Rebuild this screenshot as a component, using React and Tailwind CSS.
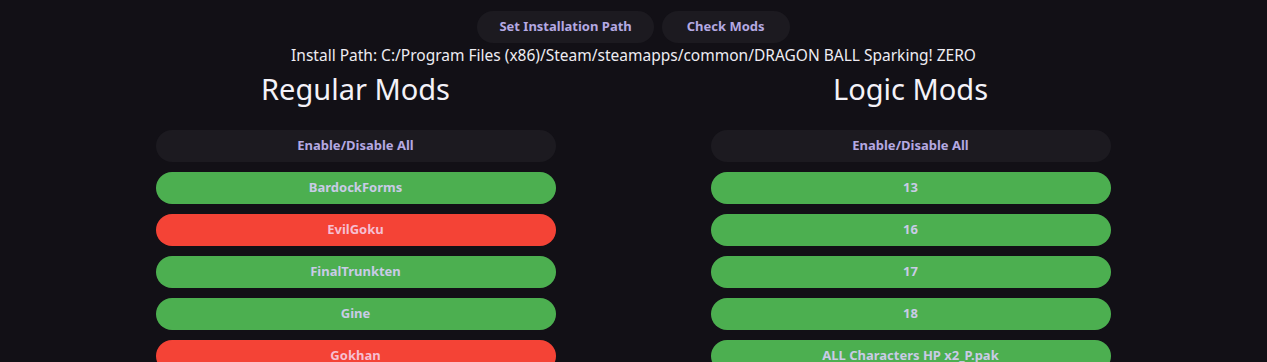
import { useState } from 'react'

const regularMods = [
  { name: 'BardockForms', on: true },
  { name: 'EvilGoku', on: false },
  { name: 'FinalTrunkten', on: true },
  { name: 'Gine', on: true },
  { name: 'Gokhan', on: false },
]

const logicMods = [
  { name: '13', on: true },
  { name: '16', on: true },
  { name: '17', on: true },
  { name: '18', on: true },
  { name: 'ALL Characters HP x2_P.pak', on: true },
]

function ModColumn({ title, mods, onToggle, onToggleAll }) {
  return (
    <div className="w-[400px] flex flex-col items-center">
      <h2 className="text-[29px] leading-[40px] text-[#f4f2f8] mb-[21px]">{title}</h2>
      <div className="w-full flex flex-col gap-[10px]">
        <button
          onClick={onToggleAll}
          className="h-[32px] w-full rounded-full bg-[#1c1a20] text-[#b4a9e2] text-[13px] font-bold"
        >
          Enable/Disable All
        </button>
        {mods.map((m, i) => (
          <button
            key={m.name}
            onClick={() => onToggle(i)}
            className={`h-[32px] w-full rounded-full text-[13px] font-bold ${
              m.on ? 'bg-[#4caf50] text-[#c9cbe6]' : 'bg-[#f44336] text-[#f6bfd2]'
            }`}
          >
            {m.name}
          </button>
        ))}
      </div>
    </div>
  )
}

function App() {
  const [regular, setRegular] = useState(regularMods)
  const [logic, setLogic] = useState(logicMods)

  const toggle = (setter) => (i) =>
    setter(prev => prev.map((m, j) => (j === i ? { ...m, on: !m.on } : m)))
  const toggleAll = (setter) => () =>
    setter(prev => {
      const allOn = prev.every(m => m.on)
      return prev.map(m => ({ ...m, on: !allOn }))
    })

  return (
    <div
      className="w-full h-[362px] overflow-hidden bg-[#121016] pt-[11px]"
      style={{ fontFamily: '"Noto Sans", "Open Sans", sans-serif' }}
    >
      {/* Top buttons */}
      <div className="flex justify-center gap-[8px]">
        <button className="h-[32px] px-[22px] rounded-full bg-[#1c1a20] text-[#b4a9e2] text-[13px] font-bold">
          Set Installation Path
        </button>
        <button className="h-[32px] px-[25px] rounded-full bg-[#1c1a20] text-[#b4a9e2] text-[13px] font-bold">
          Check Mods
        </button>
      </div>

      <p className="text-center text-[15.5px] leading-[22px] text-[#eeecf2] mt-[1px]">
        Install Path: C:/Program Files (x86)/Steam/steamapps/common/DRAGON BALL Sparking! ZERO
      </p>

      {/* Columns */}
      <div className="flex justify-center gap-[155px] mt-[3px] pr-[1px]">
        <ModColumn title="Regular Mods" mods={regular} onToggle={toggle(setRegular)} onToggleAll={toggleAll(setRegular)} />
        <ModColumn title="Logic Mods" mods={logic} onToggle={toggle(setLogic)} onToggleAll={toggleAll(setLogic)} />
      </div>
    </div>
  )
}

export default App
